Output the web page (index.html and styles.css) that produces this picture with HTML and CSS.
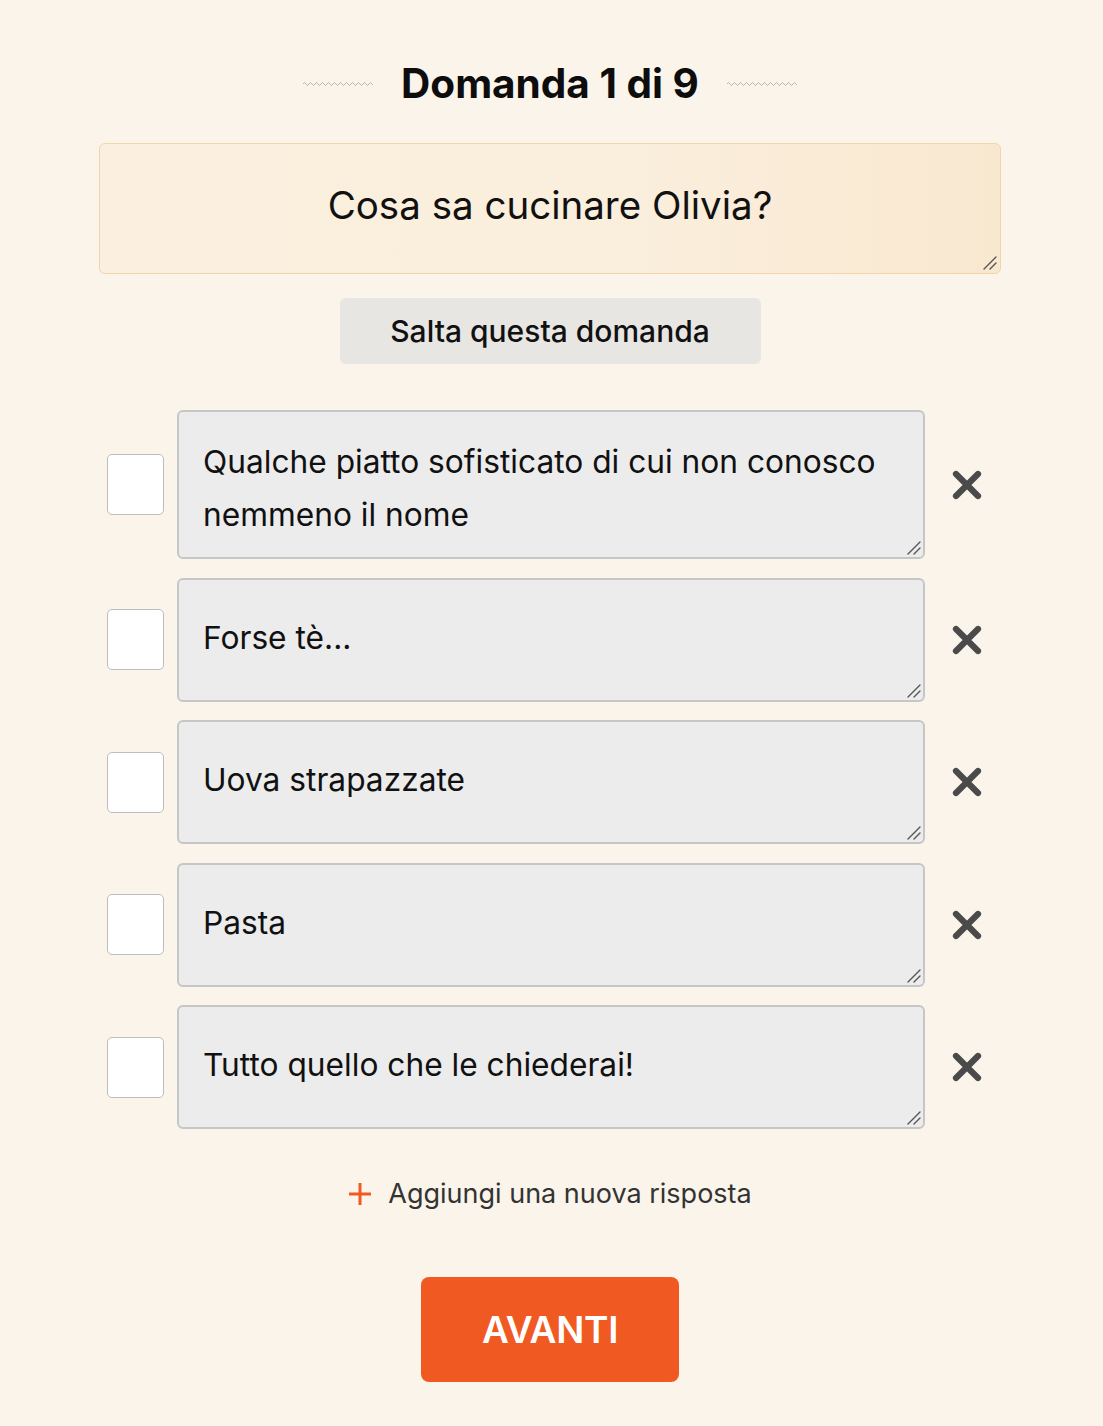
FILE: index.html
```html
<!DOCTYPE html>
<html lang="it">
<head>
<meta charset="utf-8">
<title>Domanda 1 di 9</title>
<link rel="stylesheet" href="styles.css">
</head>
<body>
<main class="page">
  <header class="title-row">
    <svg class="wave" viewBox="0 0 70 6" width="70" height="6"><path d="M0 3 q1.5 -3 3 0 t3 0 t3 0 t3 0 t3 0 t3 0 t3 0 t3 0 t3 0 t3 0 t3 0 t3 0 t3 0 t3 0 t3 0 t3 0 t3 0 t3 0 t3 0 t3 0 t3 0 t3 0 t3 0 t3 0"/></svg>
    <h1 class="title">Domanda 1 di 9</h1>
    <svg class="wave" viewBox="0 0 70 6" width="70" height="6"><path d="M0 3 q1.5 -3 3 0 t3 0 t3 0 t3 0 t3 0 t3 0 t3 0 t3 0 t3 0 t3 0 t3 0 t3 0 t3 0 t3 0 t3 0 t3 0 t3 0 t3 0 t3 0 t3 0 t3 0 t3 0 t3 0 t3 0"/></svg>
  </header>

  <div class="field question-field">
    <textarea class="question">Cosa sa cucinare Olivia?</textarea>
    <svg class="grip" viewBox="0 0 16 16" width="16" height="16"><path d="M3 15 L15 3 M9 15 L15 9"/></svg>
  </div>

  <div class="skip-wrap"><button class="skip">Salta questa domanda</button></div>

  <section class="answers">
    <div class="answer">
      <span class="check"></span>
      <div class="field answer-field">
        <textarea class="answer-text tall">Qualche piatto sofisticato di cui non conosco nemmeno il nome</textarea>
        <svg class="grip" viewBox="0 0 16 16" width="16" height="16"><path d="M3 15 L15 3 M9 15 L15 9"/></svg>
      </div>
      <svg class="remove" viewBox="0 0 32 32" width="32" height="32"><path d="M5 5 L27 27 M27 5 L5 27"/></svg>
    </div>
    <div class="answer">
      <span class="check"></span>
      <div class="field answer-field">
        <textarea class="answer-text">Forse tè...</textarea>
        <svg class="grip" viewBox="0 0 16 16" width="16" height="16"><path d="M3 15 L15 3 M9 15 L15 9"/></svg>
      </div>
      <svg class="remove" viewBox="0 0 32 32" width="32" height="32"><path d="M5 5 L27 27 M27 5 L5 27"/></svg>
    </div>
    <div class="answer">
      <span class="check"></span>
      <div class="field answer-field">
        <textarea class="answer-text">Uova strapazzate</textarea>
        <svg class="grip" viewBox="0 0 16 16" width="16" height="16"><path d="M3 15 L15 3 M9 15 L15 9"/></svg>
      </div>
      <svg class="remove" viewBox="0 0 32 32" width="32" height="32"><path d="M5 5 L27 27 M27 5 L5 27"/></svg>
    </div>
    <div class="answer">
      <span class="check"></span>
      <div class="field answer-field">
        <textarea class="answer-text">Pasta</textarea>
        <svg class="grip" viewBox="0 0 16 16" width="16" height="16"><path d="M3 15 L15 3 M9 15 L15 9"/></svg>
      </div>
      <svg class="remove" viewBox="0 0 32 32" width="32" height="32"><path d="M5 5 L27 27 M27 5 L5 27"/></svg>
    </div>
    <div class="answer">
      <span class="check"></span>
      <div class="field answer-field">
        <textarea class="answer-text">Tutto quello che le chiederai!</textarea>
        <svg class="grip" viewBox="0 0 16 16" width="16" height="16"><path d="M3 15 L15 3 M9 15 L15 9"/></svg>
      </div>
      <svg class="remove" viewBox="0 0 32 32" width="32" height="32"><path d="M5 5 L27 27 M27 5 L5 27"/></svg>
    </div>
  </section>

  <div class="add">
    <svg class="plus" viewBox="0 0 24 24" width="24" height="24"><path d="M12 1 V23 M1 12 H23"/></svg>
    <span>Aggiungi una nuova risposta</span>
  </div>

  <div class="next-wrap"><button class="next">AVANTI</button></div>
</main>
</body>
</html>
```

FILE: styles.css
```css
html, body {
  margin: 0;
  padding: 0;
  background: #faf4ea;
  font-family: Inter, "Noto Sans", "Liberation Sans", sans-serif;
  color: #111;
}

.page {
  width: 902px;
  margin: 0 0 0 99px;
  padding-top: 60px;
  padding-bottom: 44px;
}

.title-row {
  display: flex;
  align-items: center;
  justify-content: center;
  gap: 28px;
  height: 48px;
}

.title {
  margin: 0;
  font-size: 40.5px;
  font-weight: 700;
  line-height: 48px;
  letter-spacing: 0;
  color: #0d0d0d;
}

.wave {
  display: block;
}
.wave path {
  fill: none;
  stroke: #b3aea6;
  stroke-width: 0.9;
}

.field {
  position: relative;
}

.grip {
  position: absolute;
  right: 4px;
  bottom: 4px;
  pointer-events: none;
}
.grip path {
  fill: none;
  stroke: #555;
  stroke-width: 1.4;
  stroke-linecap: round;
}

.question-field {
  margin-top: 35px;
}

.question {
  display: block;
  box-sizing: border-box;
  width: 902px;
  height: 131px;
  padding: 38px 20px 0;
  border: 1.5px solid #f2d6aa;
  border-radius: 6px;
  background: linear-gradient(90deg, #fbf0df 0%, #faeedc 60%, #f9e8d0 100%);
  font-family: inherit;
  font-size: 38.5px;
  line-height: 46px;
  text-align: center;
  color: #111;
  outline: none;
  resize: none;
}

.skip-wrap {
  display: flex;
  justify-content: center;
  margin-top: 24px;
}

.skip {
  width: 421px;
  height: 66px;
  border: none;
  border-radius: 6px;
  background: #e7e6e3;
  font-family: inherit;
  font-size: 30px;
  font-weight: 500;
  color: #111;
}

.answers {
  display: flex;
  flex-direction: column;
  gap: 18.5px;
  margin-top: 46px;
}

.answer {
  display: flex;
  align-items: center;
  padding-left: 8px;
}

.check {
  flex: none;
  box-sizing: border-box;
  width: 57px;
  height: 61px;
  background: #fff;
  border: 1.5px solid #bdbdbd;
  border-radius: 5px;
}

.answer-field {
  flex: none;
  margin-left: 13px;
}

.answer-text {
  display: block;
  box-sizing: border-box;
  width: 748px;
  height: 124px;
  padding: 31px 24px 0;
  border: 2px solid #c6c6c6;
  border-radius: 6px;
  background: #ececec;
  font-family: inherit;
  font-size: 31.7px;
  line-height: 53px;
  color: #111;
  outline: none;
  resize: none;
}

.answer-text.tall {
  height: 149px;
  padding-top: 23px;
}

.remove {
  flex: none;
  margin-left: 26px;
}
.remove path {
  fill: none;
  stroke: #4a4a4a;
  stroke-width: 6.2;
  stroke-linecap: round;
}

.add {
  display: flex;
  align-items: center;
  justify-content: center;
  gap: 16px;
  margin-top: 48px;
  font-size: 27px;
  line-height: 34px;
  color: #333;
}
.plus path {
  fill: none;
  stroke: #ef5a22;
  stroke-width: 3;
}

.next-wrap {
  display: flex;
  justify-content: center;
  margin-top: 66px;
}

.next {
  width: 258px;
  height: 105px;
  border: none;
  border-radius: 8px;
  background: #f05a22;
  color: #fff;
  font-family: inherit;
  font-size: 37px;
  font-weight: 600;
  letter-spacing: -0.3px;
}
```
